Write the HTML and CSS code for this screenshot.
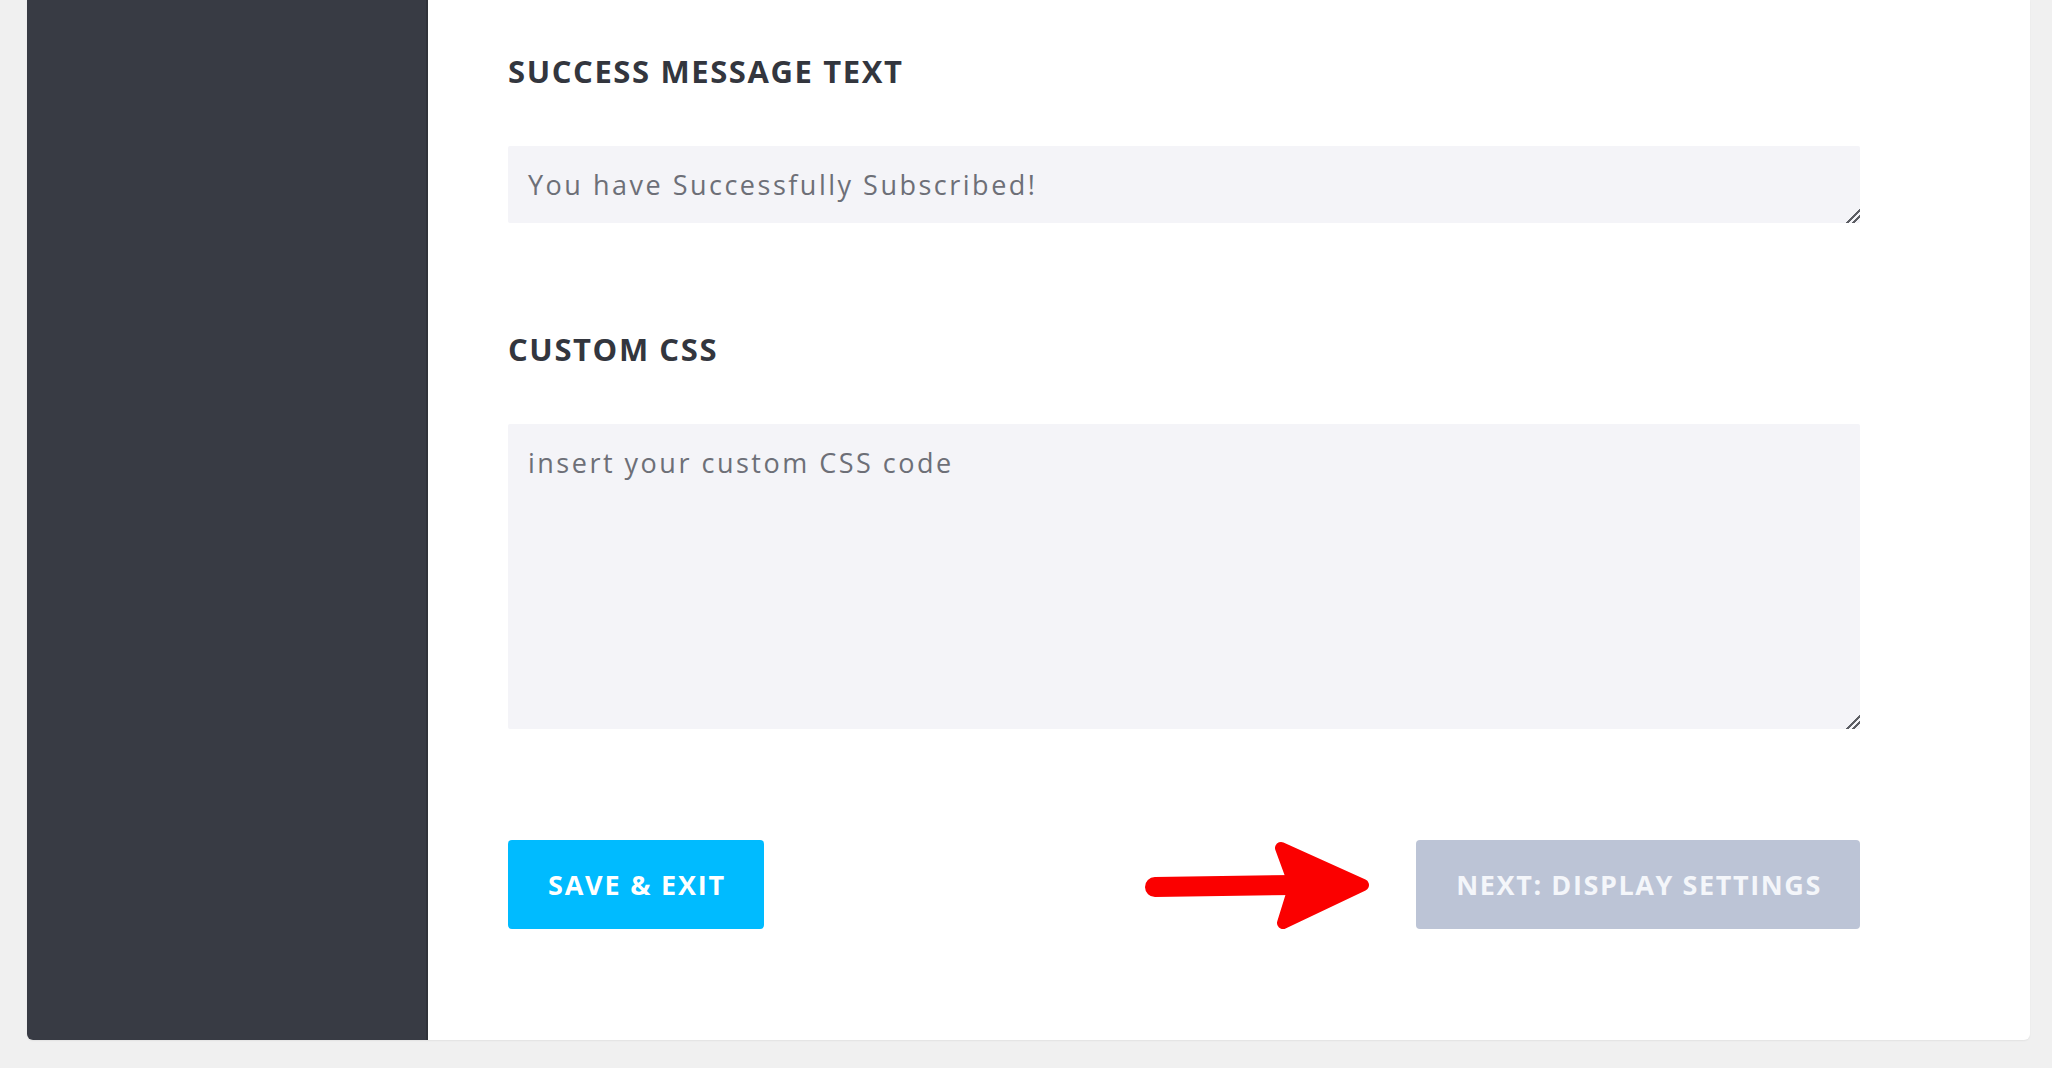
FILE: index.html
```html
<!DOCTYPE html>
<html lang="en">
<head>
<meta charset="utf-8">
<title>Form settings</title>
<link rel="stylesheet" href="styles.css">
</head>
<body>
<div class="card">
  <aside class="sidebar"></aside>
  <main class="content">
    <section class="field">
      <h2 class="field-title">SUCCESS MESSAGE TEXT</h2>
      <textarea class="input input-short">You have Successfully Subscribed!</textarea>
    </section>
    <section class="field">
      <h2 class="field-title">CUSTOM CSS</h2>
      <textarea class="input input-tall">insert your custom CSS code</textarea>
    </section>
    <div class="actions">
      <button class="btn btn-save">SAVE &amp; EXIT</button>
      <div class="next-group">
        <svg class="arrow" width="225" height="89" viewBox="0 0 225 89" aria-hidden="true">
          <line x1="10" y1="47" x2="150" y2="45" stroke="#fb0000" stroke-width="20" stroke-linecap="round"/>
          <path d="M136 8 L218 45 L138 83 L147 54 L147 38 Z" fill="#fb0000" stroke="#fb0000" stroke-width="12" stroke-linejoin="round"/>
        </svg>
        <button class="btn btn-next">NEXT: DISPLAY SETTINGS</button>
      </div>
    </div>
  </main>
</div>
</body>
</html>
```

FILE: styles.css
```css
html, body {
  margin: 0;
  padding: 0;
  background: #f0f0f0;
  height: 100%;
  overflow: hidden;
}

body {
  font-family: "Open Sans", "DejaVu Sans", sans-serif;
}

.card {
  display: flex;
  margin: 0 22px 0 27px;
  height: 1040px;
  background: #ffffff;
  border-radius: 0 0 6px 6px;
  box-shadow: 0 1px 2px rgba(0, 0, 0, 0.06);
  overflow: hidden;
}

.sidebar {
  width: 399px;
  flex: none;
  background: #383b44;
  border-right: 2px solid #30333a;
}

.content {
  flex: 1;
  padding: 54px 170px 0 80px;
  display: flex;
  flex-direction: column;
}

.field {
  display: flex;
  flex-direction: column;
  margin-bottom: 109px;
}

.field-title {
  margin: 0 0 57px;
  font-size: 31px;
  line-height: 35px;
  font-weight: 700;
  letter-spacing: 1.6px;
  color: #33363e;
}

.input {
  display: block;
  box-sizing: border-box;
  width: 100%;
  margin: 0;
  border: none;
  outline: none;
  border-radius: 2px;
  background: #f4f4f8;
  padding: 19px 18px 0 20px;
  font-family: "Open Sans", "DejaVu Sans", sans-serif;
  font-size: 27px;
  line-height: 40px;
  letter-spacing: 2.5px;
  color: #6d6f77;
  resize: vertical;
  overflow: hidden;
}

.input::-webkit-resizer {
  background: linear-gradient(135deg,
    transparent 0 52%,
    #5c5e64 52% 62%,
    transparent 62% 72%,
    #5c5e64 72% 82%,
    transparent 82%);
}

.input-short {
  height: 77px;
}

.input-tall {
  height: 305px;
}

.field + .field {
  margin-bottom: 111px;
}

.actions {
  display: flex;
  justify-content: space-between;
  align-items: center;
}

.next-group {
  display: flex;
  align-items: center;
}

.arrow {
  display: block;
  margin-right: 46px;
}

.btn {
  height: 89px;
  padding: 0 38px 0 40px;
  border: none;
  border-radius: 4px;
  font-family: "Open Sans", "DejaVu Sans", sans-serif;
  font-size: 27px;
  font-weight: 700;
  letter-spacing: 1.8px;
  color: #ffffff;
  cursor: pointer;
}

.btn-save {
  background: #00bbff;
}

.btn-next {
  background: #bcc4d6;
  color: #f4f6fa;
  letter-spacing: 1.6px;
}
```
